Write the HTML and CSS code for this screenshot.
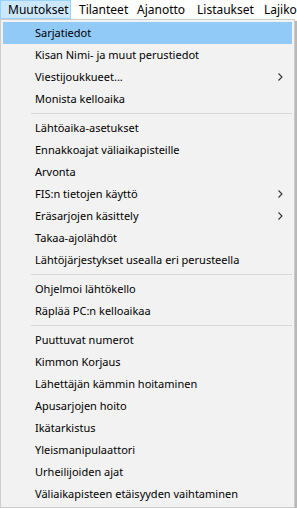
FILE: index.html
```html
<!DOCTYPE html>
<html lang="fi">
<head>
    <meta charset="UTF-8">
    <meta name="viewport" content="width=device-width, initial-scale=1.0">
    <title>Muutokset</title>
    <link rel="stylesheet" href="styles.css">
</head>
<body>

    <div class="menubar">
        <span class="top-item w71 active">Muutokset</span>
        <span class="top-item w58">Tilanteet</span>
        <span class="top-item w60">Ajanotto</span>
        <span class="top-item w67">Listaukset</span>
        <span class="top-item">Lajikohtaiset</span>
    </div>

    <div class="dropdown">
        <div class="item selected">Sarjatiedot</div>
        <div class="item">Kisan Nimi- ja muut perustiedot</div>
        <div class="item sub">Viestijoukkueet...
            <svg class="arrow" width="5" height="8" viewBox="0 0 5 8"><path d="M0.5 0.5 L4 4 L0.5 7.5" fill="none" stroke="#333" stroke-width="1.1"/></svg>
        </div>
        <div class="item">Monista kelloaika</div>
        <div class="sep"></div>
        <div class="item">Lähtöaika-asetukset</div>
        <div class="item">Ennakkoajat väliaikapisteille</div>
        <div class="item">Arvonta</div>
        <div class="item sub">FIS:n tietojen käyttö
            <svg class="arrow" width="5" height="8" viewBox="0 0 5 8"><path d="M0.5 0.5 L4 4 L0.5 7.5" fill="none" stroke="#333" stroke-width="1.1"/></svg>
        </div>
        <div class="item sub">Eräsarjojen käsittely
            <svg class="arrow" width="5" height="8" viewBox="0 0 5 8"><path d="M0.5 0.5 L4 4 L0.5 7.5" fill="none" stroke="#333" stroke-width="1.1"/></svg>
        </div>
        <div class="item">Takaa-ajolähdöt</div>
        <div class="item">Lähtöjärjestykset usealla eri perusteella</div>
        <div class="sep"></div>
        <div class="item">Ohjelmoi lähtökello</div>
        <div class="item">Räplää PC:n kelloaikaa</div>
        <div class="sep"></div>
        <div class="item">Puuttuvat numerot</div>
        <div class="item">Kimmon Korjaus</div>
        <div class="item">Lähettäjän kämmin hoitaminen</div>
        <div class="item">Apusarjojen hoito</div>
        <div class="item">Ikätarkistus</div>
        <div class="item">Yleismanipulaattori</div>
        <div class="item">Urheilijoiden ajat</div>
        <div class="item">Väliaikapisteen etäisyyden vaihtaminen</div>
    </div>

</body>
</html>
```

FILE: styles.css
```css
body {
    font-family: "Noto Sans", "Open Sans", sans-serif;
    font-size: 11px;
    color: #000;
    margin: 0;
    background: #fff;
    overflow: hidden;
}
.menubar {
    display: flex;
    height: 19px;
    background: #fff;
    white-space: nowrap;
    overflow: hidden;
    font-size: 12px;
}
.top-item {
    box-sizing: border-box;
    flex: none;
    height: 19px;
    line-height: 17px;
    padding: 0 0 0 7px;
    border: 1px solid transparent;
}
.w71 { width: 71px; }
.w58 { width: 58px; }
.w60 { width: 60px; }
.w67 { width: 67px; }
.top-item.active {
    background: #cce8ff;
    border-color: #99d1ff;
}
.dropdown {
    width: 289px;
    padding: 2px;
    background: #f2f2f2;
    border: 1px solid #cccccc;
    box-shadow: 2px 2px 1px rgba(0, 0, 0, 0.28);
}
.item {
    position: relative;
    height: 22px;
    line-height: 22px;
    padding-left: 32px;
    white-space: nowrap;
}
.item.selected {
    background: #91c9f7;
}
.arrow {
    position: absolute;
    right: 9px;
    top: 7px;
}
.sep {
    height: 7px;
    margin-left: 28px;
    background: linear-gradient(#d7d7d7, #d7d7d7) no-repeat 0 3px / 100% 1px;
}
```
